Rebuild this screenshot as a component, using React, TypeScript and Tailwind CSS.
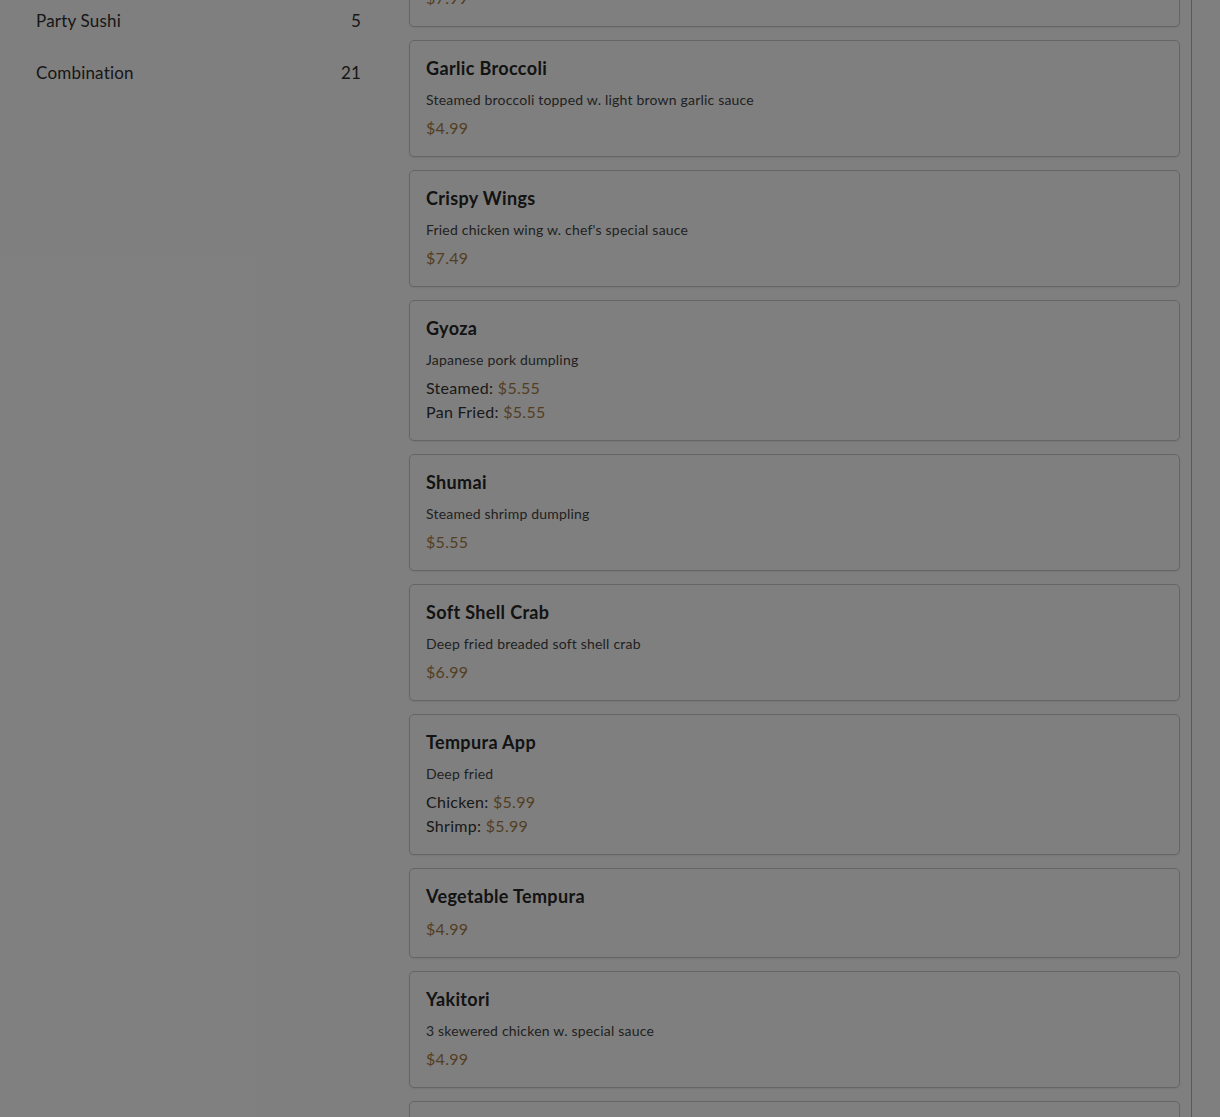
import React from "react";

type Item = {
  name: string;
  desc?: string;
  prices: { label?: string; value: string }[];
};

const items: Item[] = [
  { name: "Spring Roll", desc: "Crispy vegetable spring rolls", prices: [{ value: "$7.99" }] },
  { name: "Garlic Broccoli", desc: "Steamed broccoli topped w. light brown garlic sauce", prices: [{ value: "$4.99" }] },
  { name: "Crispy Wings", desc: "Fried chicken wing w. chef's special sauce", prices: [{ value: "$7.49" }] },
  {
    name: "Gyoza",
    desc: "Japanese pork dumpling",
    prices: [
      { label: "Steamed:", value: "$5.55" },
      { label: "Pan Fried:", value: "$5.55" },
    ],
  },
  { name: "Shumai", desc: "Steamed shrimp dumpling", prices: [{ value: "$5.55" }] },
  { name: "Soft Shell Crab", desc: "Deep fried breaded soft shell crab", prices: [{ value: "$6.99" }] },
  {
    name: "Tempura App",
    desc: "Deep fried",
    prices: [
      { label: "Chicken:", value: "$5.99" },
      { label: "Shrimp:", value: "$5.99" },
    ],
  },
  { name: "Vegetable Tempura", prices: [{ value: "$4.99" }] },
  { name: "Yakitori", desc: "3 skewered chicken w. special sauce", prices: [{ value: "$4.99" }] },
  { name: "Miso Soup", desc: "Soybean paste soup w. tofu and scallion", prices: [{ value: "$2.50" }] },
];

const cats = [
  { name: "Party Sushi", count: 5 },
  { name: "Combination", count: 21 },
];

export default function App() {
  return (
    <div
      className="relative h-[1117px] w-[1220px] overflow-hidden bg-white text-[#333]"
      style={{ fontFamily: "Lato, 'Noto Sans', sans-serif" }}
    >
      <div className="flex h-full">
        <aside className="w-[385px] shrink-0 px-6">
          <ul className="-mt-[5px]">
            {cats.map((c) => (
              <li
                key={c.name}
                className="flex items-center justify-between py-[14px] pl-3 text-[17px] leading-6 tracking-[0.2px] text-[#2e2e2e]"
              >
                <span>{c.name}</span>
                <span>{c.count}</span>
              </li>
            ))}
          </ul>
        </aside>
        <main className="w-[807px] shrink-0 border-r border-[#b4b4b4] pl-6 pr-[11px]">
          <div className="-mt-[90px] flex flex-col gap-[13px]">
            {items.map((it) => (
              <div
                key={it.name}
                className="rounded-[5px] border border-[#cbcbcb] bg-white p-4 shadow-[0_1px_2px_rgba(0,0,0,0.08)]"
              >
                <h3 className="mb-2.5 text-[18px] font-bold leading-[22px] tracking-[0.35px] text-[#262626]">{it.name}</h3>
                {it.desc && (
                  <p className="mb-1.5 text-[14px] leading-[21px] tracking-[0.2px] text-[#444]">{it.desc}</p>
                )}
                {it.prices.map((p, i) => (
                  <div key={i} className="text-[16px] leading-6 tracking-[0.3px] text-[#333]">
                    {p.label && <span>{p.label} </span>}
                    <span className="text-[#a87d45]">{p.value}</span>
                  </div>
                ))}
              </div>
            ))}
          </div>
        </main>
        <div className="flex-1" />
      </div>
      <div className="absolute inset-0 bg-black/50" />
    </div>
  );
}
